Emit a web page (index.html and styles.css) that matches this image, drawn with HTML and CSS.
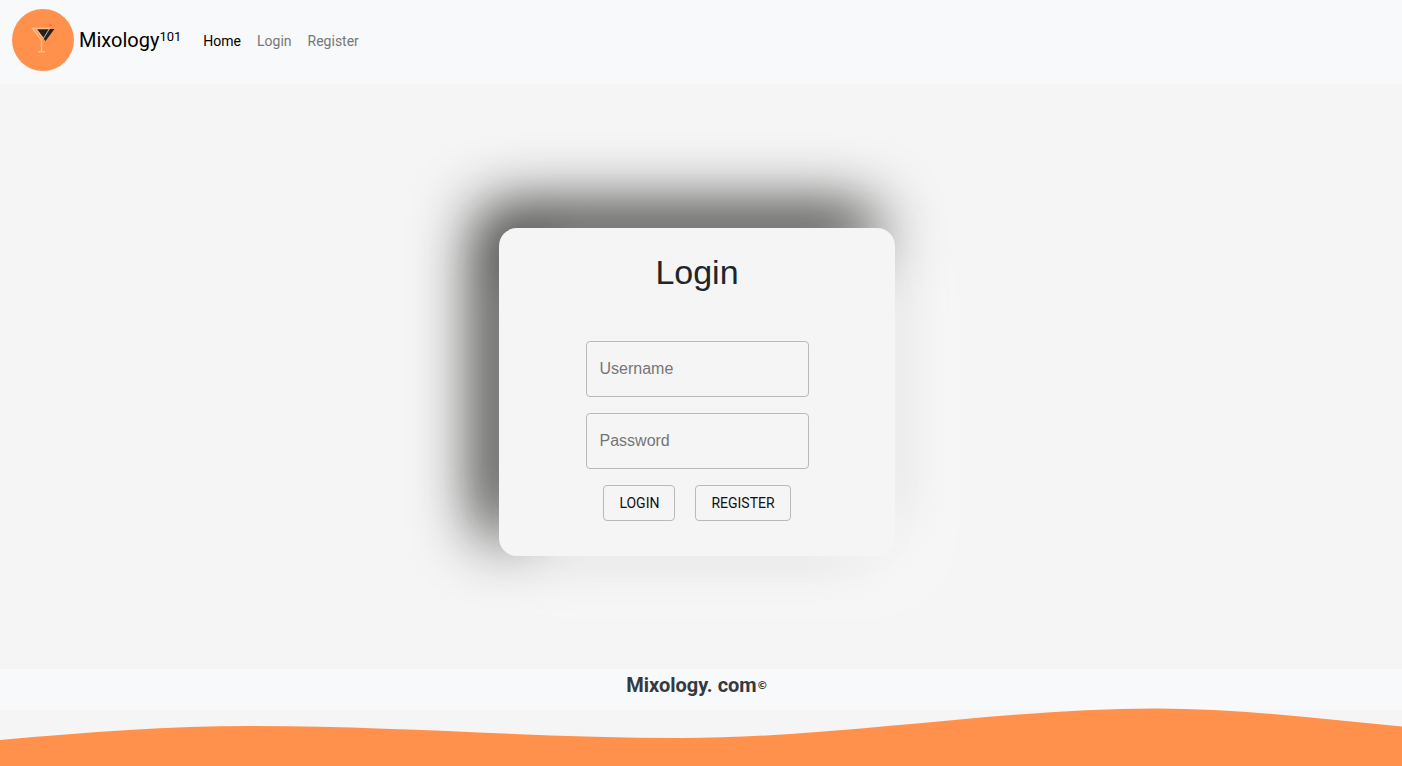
FILE: index.html
```html
<!DOCTYPE html>
<html lang="en">
<head>
<meta charset="utf-8">
<meta name="viewport" content="width=device-width, initial-scale=1">
<title>Mixology 101</title>
<link rel="stylesheet" href="styles.css">
</head>
<body>
<header class="navbar">
  <a class="brand" href="#">
    <svg class="logo" viewBox="0 0 62 62" aria-hidden="true">
      <circle cx="31" cy="31" r="31" fill="#ff914d"/>
      <circle cx="38.500" cy="16" r="1.500" fill="#f5754a"/>
      <path d="M23.500 20H42.500L33.500 32Z" fill="#222421"/>
      <path d="M24 20L31.500 30M29.500 31.500L20.500 19.500H38M29.500 31V42M26 42.700H33" fill="none" stroke="#ffbd87" stroke-width="1.400"/>
      <path d="M38.500 18L30.500 31" fill="none" stroke="#d8b094" stroke-width="1"/>
    </svg>
    <span>Mixology<sup>101</sup></span>
  </a>
  <nav class="links">
    <a class="link active" href="#">Home</a>
    <a class="link" href="#">Login</a>
    <a class="link" href="#">Register</a>
  </nav>
</header>
<main class="main">
  <form class="card">
    <h1 class="title">Login</h1>
    <input class="field" type="text" placeholder="Username" aria-label="Username">
    <input class="field" type="password" placeholder="Password" aria-label="Password">
    <div class="actions">
      <button class="button" type="button">LOGIN</button>
      <button class="button" type="button">REGISTER</button>
    </div>
  </form>
</main>
<footer class="footer">
  <p class="credit">Mixology. com<span class="mark">©</span></p>
  <svg class="wave" viewBox="0 0 1402 58" preserveAspectRatio="none" aria-hidden="true">
    <path d="M0 32C90 24 170 18 250 18C400 18 540 30 680 30C840 30 1000 0.500 1155 0.500C1240 0.500 1320 11 1402 18.500V58H0Z" fill="#ff914d"/>
  </svg>
</footer>
</body>
</html>
```
FILE: styles.css
```css
* { box-sizing: border-box; }
body {
  margin: 0;
  min-height: 100vh;
  display: flex;
  flex-direction: column;
  background: #f5f5f5;
  color: #212529;
  font-family: Roboto, "Open Sans", sans-serif;
  font-size: 14px;
  line-height: 24px;
}
.navbar {
  display: flex;
  align-items: center;
  gap: 14px;
  padding: 9px 12px 13px;
  background: #f8f9fb;
}
.brand {
  display: flex;
  align-items: center;
  gap: 5px;
  color: #000;
  font-size: 20px;
  text-decoration: none;
}
.logo { width: 62px; height: 62px; }
.brand sup { font-size: 13px; line-height: 0; vertical-align: 6px; }
.links { display: flex; }
.link { padding: 9px 8px 7px; color: #777; text-decoration: none; }
.link.active { color: #000; }
.main {
  flex: 1;
  display: flex;
  justify-content: center;
  align-items: flex-start;
  padding: 144px 8px 112px 0;
}
.card {
  width: 396px;
  display: flex;
  flex-direction: column;
  align-items: center;
  gap: 16px;
  padding: 24px 0 35px;
  border-radius: 18px;
  background: #f5f5f5;
  box-shadow: 22px 22px 66px #fefefe, -20px -20px 62px #1b1b19;
}
.title {
  margin: 0 0 33px;
  font: 400 34px/40px "Liberation Sans", Arial, sans-serif;
}
.field {
  width: 223px;
  height: 56px;
  padding: 0 13px;
  border: 1px solid #b9b9b9;
  border-radius: 4px;
  background: transparent;
  color: #212529;
  font: 16px "Liberation Sans", Arial, sans-serif;
}
.field::placeholder { color: #757575; opacity: 1; }
.actions { display: flex; gap: 20px; }
.button {
  height: 36px;
  padding: 0 15px;
  border: 1px solid #b9b9b9;
  border-radius: 4px;
  background: transparent;
  color: #111;
  font-family: inherit;
  font-size: 14px;
}
.footer { display: flex; flex-direction: column; }
.credit {
  margin: 0;
  padding: 0 8px 9px 0;
  background: #f8f9fb;
  color: #343a40;
  font-size: 20px;
  font-weight: 700;
  line-height: 32px;
  text-align: center;
}
.mark { font-family: "DejaVu Sans", sans-serif; font-size: 11px; vertical-align: 3px; line-height: 0; }
.wave { display: block; width: 100%; height: 58px; margin-top: -2px; }
```
